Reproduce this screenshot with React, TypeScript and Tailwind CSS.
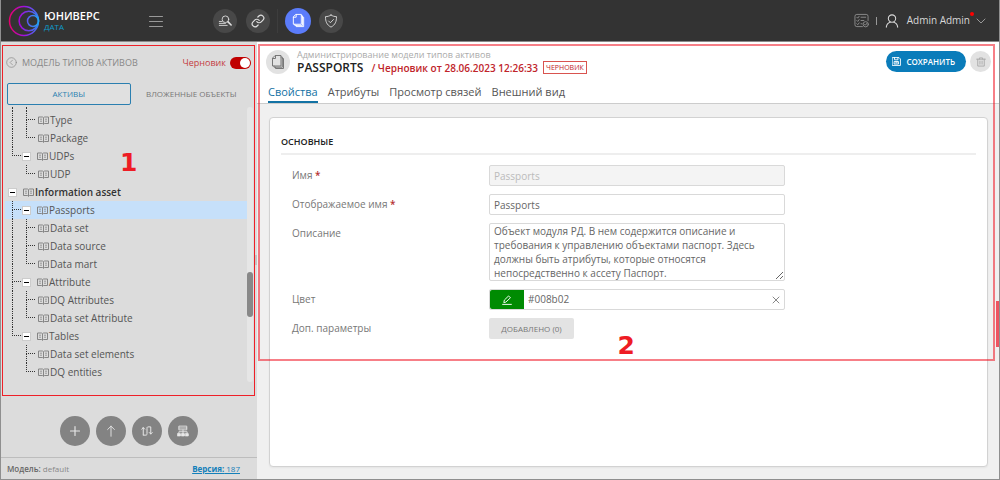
import { useState } from "react";
import type { ReactNode } from "react";

type Line = "none" | "pass" | "tee" | "end";

type Row = {
  label: string;
  level: 0 | 1 | 2;
  outer?: Line;
  inner?: Line;
};

const ROWS: Row[] = [
  { label: "Type", level: 2, outer: "pass", inner: "tee" },
  { label: "Package", level: 2, outer: "pass", inner: "end" },
  { label: "UDPs", level: 1, outer: "end" },
  { label: "UDP", level: 2, outer: "none", inner: "end" },
  { label: "Information asset", level: 0 },
  { label: "Passports", level: 1, outer: "tee" },
  { label: "Data set", level: 2, outer: "pass", inner: "tee" },
  { label: "Data source", level: 2, outer: "pass", inner: "tee" },
  { label: "Data mart", level: 2, outer: "pass", inner: "end" },
  { label: "Attribute", level: 1, outer: "tee" },
  { label: "DQ Attributes", level: 2, outer: "pass", inner: "tee" },
  { label: "Data set Attribute", level: 2, outer: "pass", inner: "end" },
  { label: "Tables", level: 1, outer: "end" },
  { label: "Data set elements", level: 2, outer: "none", inner: "tee" },
  { label: "DQ entities", level: 2, outer: "none", inner: "end" },
];

const TABS = ["Свойства", "Атрибуты", "Просмотр связей", "Внешний вид"];

const DESCRIPTION =
  "Объект модуля РД. В нем содержится описание и требования к управлению объектами паспорт. Здесь должны быть атрибуты, которые относятся непосредственно к ассету Паспорт.";

function Icon({ size, box = 16, width = 1, children }: { size: number; box?: number; width?: number; children: ReactNode }) {
  return (
    <svg width={size} height={size} viewBox={`0 0 ${box} ${box}`} fill="none" stroke="currentColor"
      strokeWidth={width} strokeLinecap="round" strokeLinejoin="round" className="shrink-0" aria-hidden="true">
      {children}
    </svg>
  );
}

function Logo() {
  return (
    <svg width="32" height="32" viewBox="0 0 32 32" fill="none" aria-hidden="true">
      <defs>
        <linearGradient id="outer" x1="0" y1="0" x2="1" y2="0">
          <stop offset="0" stopColor="#e5006d" />
          <stop offset="0.5" stopColor="#a010e0" />
          <stop offset="1" stopColor="#3a7cf5" />
        </linearGradient>
        <linearGradient id="middle" x1="0" y1="0" x2="1" y2="0">
          <stop offset="0" stopColor="#a800d8" />
          <stop offset="1" stopColor="#2f8cf5" />
        </linearGradient>
        <linearGradient id="small" x1="0" y1="0" x2="1" y2="0">
          <stop offset="0" stopColor="#5a5cf0" />
          <stop offset="1" stopColor="#20a8f0" />
        </linearGradient>
      </defs>
      <circle cx="16" cy="16" r="14.5" stroke="url(#outer)" strokeWidth="1.5" />
      <circle cx="20.8" cy="16" r="9.7" stroke="url(#middle)" strokeWidth="1.5" />
      <circle cx="25" cy="16" r="5.5" stroke="url(#small)" strokeWidth="1.5" />
    </svg>
  );
}

function PagesIcon({ size }: { size: number }) {
  return (
    <Icon size={size}>
      <path d="M5.500 1.500h5.500v10.500H2.500V4.500z" />
      <path d="M5.500 1.500v3h-3" />
      <path d="M4 12v1.200h8.300V3H11M5.500 13.200v1.300h8V4.500h-1.200" />
    </Icon>
  );
}

function BookIcon() {
  return (
    <svg width="11" height="9" viewBox="0 0 11 9" fill="none" stroke="#858585" className="shrink-0" aria-hidden="true">
      <path d="M0.500 1h4l1 0.700 1-0.700h4v6.500h-4l-1 0.800-1-0.800h-4zM5.500 1.700v6.500" />
      <path d="M2 3.200h2M2 5.200h2M7 3.200h2M7 5.200h2" strokeWidth="0.800" />
    </svg>
  );
}

function HeaderButton({ label, active, children }: { label: string; active?: boolean; children: ReactNode }) {
  return (
    <button aria-label={label}
      className={`flex items-center justify-center rounded-full ${active ? "size-[26px] bg-[#5b7cfa] text-white" : "size-6 bg-[#484848] text-[#e0e0e0]"}`}>
      {children}
    </button>
  );
}

function Header() {
  return (
    <header className="flex h-[42px] shrink-0 items-center border-b border-[#8a8a8a] bg-[#333] pr-[13px] pl-[7px] text-white">
      <div className="flex w-[141px] items-center gap-1">
        <Logo />
        <div>
          <p className="text-[11px] leading-3 font-semibold">ЮНИВЕРС</p>
          <p className="text-[8px] leading-[10px] text-[#0d9ccc]">ДАТА</p>
        </div>
      </div>
      <button aria-label="Меню" className="text-[#999]">
        <Icon size={14} box={14}><path d="M0.500 2.500h13M0.500 7.500h13M0.500 12.500h13" /></Icon>
      </button>
      <nav className="ml-[50px] flex items-center">
        <HeaderButton label="Поиск">
          <Icon size={14}>
            <circle cx="8.500" cy="6" r="3.800" />
            <path d="M11.500 9l3.500 3.500" strokeWidth="1.800" />
            <path d="M1.500 8.500h3M1.500 10.700h7M1.500 13h9" />
          </Icon>
        </HeaderButton>
        <span className="w-[9px]" />
        <HeaderButton label="Связи">
          <Icon size={14} box={24} width={2}>
            <path d="M10 13a5 5 0 0 0 7.540.540l3-3a5 5 0 0 0-7.070-7.070l-1.720 1.710" />
            <path d="M14 11a5 5 0 0 0-7.540-.540l-3 3a5 5 0 0 0 7.070 7.070l1.710-1.710" />
          </Icon>
        </HeaderButton>
        <span className="mx-[7px] h-6 w-px bg-[#3d3d3d]" />
        <HeaderButton label="Модель" active><PagesIcon size={15} /></HeaderButton>
        <span className="w-2" />
        <HeaderButton label="Безопасность">
          <Icon size={14}>
            <path d="M8 1.200c2 1.300 4 1.800 6.300 1.800 0 5.500-1.300 9.300-6.300 12C3 12.300 1.700 8.500 1.700 3 4 3 6 2.500 8 1.200z" />
            <path d="M5.300 8l2 2 3.500-3.700" />
          </Icon>
        </HeaderButton>
      </nav>
      <div className="ml-auto flex items-center text-[#d8d8d8]">
        <button aria-label="Задачи" className="text-[#8d8d8d]">
          <Icon size={15}>
            <path d="M15 8V3.500a2 2 0 0 0-2-2H3a2 2 0 0 0-2 2v9a2 2 0 0 0 2 2h6" />
            <path d="M3 4.500l1 1 1.500-2M3 8l1 1 1.500-2M3 11.500l1 1 1.500-2M7.500 4.500h5M7.500 8h3M7.500 11.500h1" />
            <circle cx="12.500" cy="12" r="2.800" />
            <path d="M11.200 12l1 1 1.600-2" />
          </Icon>
        </button>
        <span className="mr-2 ml-[7px] h-2 w-px bg-[#999]" />
        <button className="flex items-center text-[10px]">
          <Icon size={14} width={1.2}>
            <circle cx="8" cy="5.200" r="4.200" />
            <path d="M1.500 15c.500-3.500 2.500-5 4.500-5.500M14.500 15c-.500-3.500-2.500-5-4.500-5.500" />
          </Icon>
          <span className="relative ml-2">
            Admin Admin
            <span className="absolute -top-px -right-1 size-1 rounded-full bg-[#f00]" />
          </span>
          <span className="ml-[6px] text-[#999]">
            <Icon size={10} box={10}><path d="M1 3l4 4 4-4" /></Icon>
          </span>
        </button>
      </div>
    </header>
  );
}

function Guide({ line = "none" }: { line?: Line }) {
  return (
    <span className="flex h-full w-[14px] shrink-0 justify-end pr-px">
      {line !== "none" && (
        <span className="flex h-full w-[6px] flex-col">
          <span className={`h-[9px] border-l border-dotted border-[#333] ${line === "pass" ? "" : "w-[9px] border-b"}`} />
          {line !== "end" && <span className="h-[9px] border-l border-dotted border-[#333]" />}
        </span>
      )}
    </span>
  );
}

function TreeRow({ row, selected, onSelect }: { row: Row; selected: boolean; onSelect: () => void }) {
  return (
    <li role="treeitem" aria-level={row.level + 1} aria-selected={selected} onClick={onSelect}
      className={`flex h-[18px] items-center ${selected ? "bg-[#c6e0fa]" : ""}`}>
      {row.level > 0 && <Guide line={row.outer} />}
      {row.level === 2 && <Guide line={row.inner} />}
      {row.level < 2 ? (
        <button aria-label={`Свернуть ${row.label}`} className="mr-[6px] ml-[3px] flex size-[9px] shrink-0 items-center justify-center border border-[#ccc] bg-white">
          <span className="h-px w-[5px] bg-black" />
        </button>
      ) : (
        <span className="w-[5px]" />
      )}
      <BookIcon />
      <span className={row.level === 0 ? "pl-px font-semibold text-[#333]" : "pl-px"}>{row.label}</span>
    </li>
  );
}

const ROUND = "flex size-[30px] items-center justify-center rounded-full bg-[#838383] text-[#e8e8e8]";

function Sidebar() {
  const [selected, setSelected] = useState("Passports");

  return (
    <aside className="relative flex w-[256px] shrink-0 flex-col bg-[#dcdcdc] text-[10px] text-[#555]">
      <div className="flex h-[41px] shrink-0 items-center pr-[6px] pl-[5px]">
        <button aria-label="Назад" className="text-[#888]">
          <Icon size={11}><circle cx="8" cy="8" r="7" /><path d="M9.500 4.500L6 8l3.500 3.500" /></Icon>
        </button>
        <h2 className="ml-[5px] text-[9px] text-[#888]">МОДЕЛЬ ТИПОВ АКТИВОВ</h2>
        <label htmlFor="draft" className="mr-1 ml-auto text-[9px] text-[#c43c42]">Черновик</label>
        <input id="draft" type="checkbox" role="switch" defaultChecked
          className="h-3 w-[21px] appearance-none rounded-full bg-[#c00000] after:mt-px after:mr-px after:ml-auto after:block after:size-[10px] after:rounded-full after:bg-white" />
      </div>
      <div className="mr-[5px] ml-[6px] flex h-[22px] shrink-0 text-[8px]">
        <button className="flex-1 rounded-xs border border-[#2b7fb0] bg-[#e0e0e0] text-[#2b7fb0]">АКТИВЫ</button>
        <button className="flex-1 text-[#777]">ВЛОЖЕННЫЕ ОБЪЕКТЫ</button>
      </div>
      <div className="mt-[2px] mr-1 ml-1 flex h-[275px] shrink-0">
        <ul role="tree" className="flex-1">
          <li className="flex h-1" aria-hidden="true">
            <span className="ml-[7px] w-[14px] border-l border-dotted border-[#333]" />
            <span className="border-l border-dotted border-[#333]" />
          </li>
          {ROWS.map((row) => (
            <TreeRow key={row.label} row={row} selected={row.label === selected} onSelect={() => setSelected(row.label)} />
          ))}
        </ul>
        <div className="w-[6px] rounded-full bg-[#e6e6e6] pt-[165px]">
          <div className="h-[45px] rounded-full bg-[#888]" />
        </div>
      </div>
      <div className="mt-auto flex justify-center gap-[6px] pb-[11px]">
        <button aria-label="Добавить" className={ROUND}>
          <Icon size={12} width={1.5}><path d="M8 2v12M2 8h12" /></Icon>
        </button>
        <button aria-label="Загрузить" className={ROUND}>
          <Icon size={12} width={1.2}><path d="M8 15V1.500M3.500 6L8 1.500 12.500 6" /></Icon>
        </button>
        <button aria-label="Связать" className={ROUND}>
          <Icon size={12} width={1.3}>
            <path d="M3 13V3.500M1 5.500l2-2 2 2M3 13.500h3.500c1.500 0 1.500-1 1.500-2v-7c0-1 0-2 1.500-2h3.500v9.500M11 10l2 2 2-2" />
          </Icon>
        </button>
        <button aria-label="Структура" className={ROUND}>
          <Icon size={12} width={1.2}>
            <path d="M3 1.500h10v5H3zM3 4h10M8 6.500v5M2.500 11V9h11v2" />
            <path d="M1 11.500h3.500v3H1zM6.300 11.500h3.500v3H6.300zM11.500 11.500H15v3h-3.500z" fill="currentColor" />
          </Icon>
        </button>
      </div>
      <footer className="flex h-[22px] shrink-0 items-center justify-between border-t border-[#bdbdbd] pr-[17px] pl-[6px] text-[8px]">
        <p className="text-[#888]"><span className="font-semibold text-[#666]">Модель:</span> default</p>
        <a href="#version" className="text-[#1380ba] underline"><span className="font-bold">Версия:</span> 187</a>
      </footer>
      <div className="pointer-events-none absolute top-[3px] bottom-[83px] left-px w-[253px] border border-[#ee2028]">
        <span className="absolute top-[102px] left-[117px] font-['DejaVu_Sans'] text-[25px] leading-[30px] font-bold text-[#ee1c24]">1</span>
      </div>
      <span className="absolute top-[213px] right-0 h-[10px] w-[2px] bg-[#c4c4c4]" />
    </aside>
  );
}

function Field({ id, label, required, children }: { id: string; label: string; required?: boolean; children: ReactNode }) {
  return (
    <div className="grid grid-cols-[197px_minmax(0,296px)]">
      <label htmlFor={id} className="h-[21px] leading-[21px] text-[#777]">
        {label} {required && <span className="font-semibold text-[#b5302f]">*</span>}
      </label>
      {children}
    </div>
  );
}

const INPUT = "w-full rounded-xs border border-[#d9d9d9] px-1 text-[#666]";

function PropertiesForm() {
  const [color, setColor] = useState("#008b02");

  return (
    <form className="flex-1 rounded border border-[#d2d2d2] bg-white px-[11px] pt-4 text-[10px] shadow-xs">
      <h3 className="border-b-2 border-[#eee] pb-[3px] text-[9px] leading-4 font-semibold text-[#222]">ОСНОВНЫЕ</h3>
      <div className="mt-[10px] flex flex-col gap-2 pl-[11px]">
        <Field id="name" label="Имя" required>
          <input id="name" disabled defaultValue="Passports" className="h-[21px] w-full rounded-xs border border-[#d9d9d9] bg-[#f4f4f4] px-1 text-[#bbb]" />
        </Field>
        <Field id="display" label="Отображаемое имя" required>
          <input id="display" defaultValue="Passports" className={`h-[21px] ${INPUT}`} />
        </Field>
        <Field id="description" label="Описание">
          <textarea id="description" defaultValue={DESCRIPTION} className={`block h-[58px] overflow-hidden leading-[14px] ${INPUT}`} />
        </Field>
        <Field id="color" label="Цвет">
          <div className="flex h-[21px] items-center rounded-xs border border-[#d9d9d9]">
            <button type="button" aria-label="Выбрать цвет" className="flex h-full w-[34px] items-center justify-center rounded-l-xs text-white" style={{ backgroundColor: color || "#fff" }}>
              <Icon size={10}><path d="M3 11.500l.800-3.500L10.500 1.500l3 3L6.500 11zM1 15h14" strokeWidth="1.500" /></Icon>
            </button>
            <input id="color" value={color} onChange={(e) => setColor(e.target.value)} className="min-w-0 flex-1 px-1 text-[#666]" />
            <button type="button" aria-label="Очистить" className="px-1 text-[#888]" onClick={() => setColor("")}>
              <Icon size={8} box={8}><path d="M1 1l6 6M7 1L1 7" /></Icon>
            </button>
          </div>
        </Field>
        <Field id="extra" label="Доп. параметры">
          <button id="extra" type="button" className="h-[21px] w-[85px] rounded-xs bg-[#e3e3e3] text-[8px] text-[#777]">ДОБАВЛЕНО (0)</button>
        </Field>
      </div>
    </form>
  );
}

function Main() {
  const [tab, setTab] = useState(TABS[0]);

  return (
    <main className="relative flex min-w-0 flex-1 flex-col bg-[#f0f0f0]">
      <div className="border-b border-[#ccc] bg-white">
        <div className="flex h-[39px] items-center pr-2 pl-[9px]">
          <span className="flex size-6 items-center justify-center rounded-full bg-[#e2e2e2] text-[#777]"><PagesIcon size={16} /></span>
          <div className="ml-[7px]">
            <p className="text-[9px] leading-3 text-[#aaa]">Администрирование модели типов активов</p>
            <div className="flex items-center">
              <h1 className="text-[12px] leading-[14px] font-semibold text-[#222]">PASSPORTS</h1>
              <p className="ml-2 text-[10px] leading-[14px] font-semibold text-[#c0242a]">/ Черновик от 28.06.2023 12:26:33</p>
              <span className="ml-[5px] border border-[#d9534f] px-[2px] text-[7px] leading-[11px] text-[#c0242a]">ЧЕРНОВИК</span>
            </div>
          </div>
          <button className="ml-auto flex h-[21px] items-center gap-[5px] rounded-full bg-[#0a7cba] pr-[11px] pl-[6px] text-[8px] font-semibold text-white">
            <Icon size={9} width={1.600}>
              <path d="M1 1h11.500L15 3.500V15H1zM4.500 1v4h6V1M4.500 8h7v4.500h-7zM6.500 10.200h3" />
            </Icon>
            СОХРАНИТЬ
          </button>
          <button aria-label="Удалить" className="ml-1 flex size-[21px] items-center justify-center rounded-full bg-[#e2e2e2] text-[#aaa]">
            <Icon size={10} width={1.500}><path d="M1 3.500h14M5.500 3.500v-2h5v2M2.800 3.500v11h10.400v-11M6.300 6.500v5M9.700 6.500v5" /></Icon>
          </button>
        </div>
        <nav role="tablist" className="flex h-[22px] gap-[10px] pl-[11px] text-[11px]">
          {TABS.map((name) => (
            <button key={name} role="tab" aria-selected={name === tab} onClick={() => setTab(name)}
              className={`flex items-center border-b-2 pt-[2px] ${name === tab ? "border-[#1272a4] text-[#1272a4]" : "border-transparent text-[#555]"}`}>
              {name}
            </button>
          ))}
        </nav>
      </div>
      <div className="flex flex-1 pt-[13px] pr-[11px] pb-3 pl-3">
        <PropertiesForm />
      </div>
      <div className="pointer-events-none absolute top-[2px] right-1 left-px h-[317px] border-2 border-[#f00010]/50">
        <span className="absolute right-[358px] bottom-[-2px] font-['DejaVu_Sans'] text-[25px] leading-[30px] font-bold text-[#ee1c24]">2</span>
      </div>
      <div className="absolute top-[259px] right-0 h-[46px] w-[3px] bg-[#ee5562]" />
    </main>
  );
}

export default function App() {
  return (
    <div className="flex min-h-screen flex-col border-x border-b border-[#8f8f8f] font-['Open_Sans','Noto_Sans',sans-serif]">
      <Header />
      <div className="flex flex-1">
        <Sidebar />
        <Main />
      </div>
    </div>
  );
}
